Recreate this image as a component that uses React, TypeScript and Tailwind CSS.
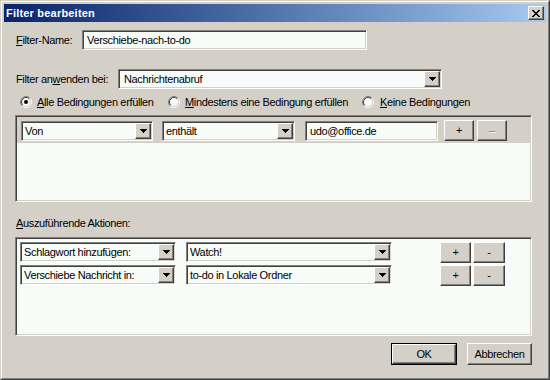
import React from 'react';

const raised =
  'border border-t-white border-l-white border-r-[#404040] border-b-[#404040] shadow-[inset_-1px_-1px_0_#808080] bg-[#d4d0c8]';
const sunken =
  'border border-t-[#808080] border-l-[#808080] border-r-white border-b-white shadow-[inset_1px_1px_0_#404040,inset_-1px_-1px_0_#d4d0c8]';

function Arrow() {
  return (
    <svg width="7" height="4" shapeRendering="crispEdges">
      <rect x="0" y="0" width="7" height="1" fill="#000" />
      <rect x="1" y="1" width="5" height="1" fill="#000" />
      <rect x="2" y="2" width="3" height="1" fill="#000" />
      <rect x="3" y="3" width="1" height="1" fill="#000" />
    </svg>
  );
}

function TextBox({ w, text }: { w: string; text: string }) {
  return (
    <div className={`${sunken} ${w} h-[20px] bg-[#f8fcf8] flex items-center pl-[4px]`}>
      {text}
    </div>
  );
}

function Combo({ w, text, pad = 'pl-[2px]' }: { w: string; text: string; pad?: string }) {
  return (
    <div className={`${sunken} ${w} h-[20px] bg-[#f8fcf8] flex items-stretch p-[1px]`}>
      <span className={`flex-1 flex items-center ${pad} whitespace-nowrap overflow-hidden`}>{text}</span>
      <span className={`${raised} w-[16px] flex items-center justify-center`}>
        <Arrow />
      </span>
    </div>
  );
}

function Btn({ w, h = 'h-[21px]', children, dim }: { w: string; h?: string; children: React.ReactNode; dim?: boolean }) {
  return (
    <div
      className={`${raised} ${w} ${h} flex items-center justify-center ${
        dim ? 'text-[#808080] [text-shadow:1px_1px_0_#fff]' : 'text-black'
      }`}
    >
      {children}
    </div>
  );
}

function Radio({ on }: { on?: boolean }) {
  return (
    <svg width="12" height="12" className="shrink-0">
      <circle cx="6" cy="6" r="4.5" fill="#f8fcf8" />
      <path d="M2.11 9.89 A5.5 5.5 0 0 1 9.89 2.11" stroke="#808080" fill="none" />
      <path d="M9.89 2.11 A5.5 5.5 0 0 1 2.11 9.89" stroke="#ffffff" fill="none" />
      <path d="M2.82 9.18 A4.5 4.5 0 0 1 9.18 2.82" stroke="#404040" fill="none" />
      <path d="M9.18 2.82 A4.5 4.5 0 0 1 2.82 9.18" stroke="#d4d0c8" fill="none" />
      {on && <circle cx="6" cy="6" r="2" fill="#000" />}
    </svg>
  );
}

function CloseGlyph() {
  const px: [number, number][] = [
    [0, 0], [1, 0], [6, 0], [7, 0],
    [1, 1], [2, 1], [5, 1], [6, 1],
    [2, 2], [3, 2], [4, 2], [5, 2],
    [3, 3], [4, 3],
    [2, 4], [3, 4], [4, 4], [5, 4],
    [1, 5], [2, 5], [5, 5], [6, 5],
    [0, 6], [1, 6], [6, 6], [7, 6],
  ];
  return (
    <svg width="8" height="7" shapeRendering="crispEdges">
      {px.map(([x, y]) => (
        <rect key={`${x}-${y}`} x={x} y={y} width="1" height="1" fill="#000" />
      ))}
    </svg>
  );
}

export default function App() {
  return (
    <div className="w-[550px] h-[380px] bg-[#d4d0c8] font-['Liberation_Sans',Arial,sans-serif] text-[11px] tracking-[-0.35px] text-black leading-[13px] select-none">
      {/* window frame */}
      <div className="w-full h-full border border-t-[#d4d0c8] border-l-[#d4d0c8] border-r-[#404040] border-b-[#404040]">
        <div className="w-full h-full border border-t-white border-l-white border-r-[#808080] border-b-[#808080] p-[2px] flex flex-col">
          {/* title bar */}
          <div className="h-[18px] shrink-0 bg-gradient-to-r from-[#0a246a] to-[#a6caf0] flex items-center pl-[2px] pr-[2px]">
            <span className="flex-1 text-white font-bold tracking-[0.2px]">Filter bearbeiten</span>
            <div className={`${raised} w-[16px] h-[14px] flex items-center justify-center`}>
              <CloseGlyph />
            </div>
          </div>

          {/* body */}
          <div className="flex-1 flex flex-col pl-[11px] pr-[14px]">
            <div className="mt-[8px] h-[20px] flex items-center">
              <span className="ml-[1px] w-[66px]">
                <span className="underline">F</span>ilter-Name:
              </span>
              <TextBox w="w-[285px]" text="Verschiebe-nach-to-do" />
            </div>

            <div className="mt-[19px] h-[20px] flex items-center">
              <span className="ml-[1px] w-[102px]">
                Filter an<span className="underline">w</span>enden bei:
              </span>
              <Combo w="w-[324px]" text="Nachrichtenabruf" pad="pl-[4px]" />
            </div>

            <div className="mt-[7px] h-[12px] flex items-center">
              <div className="ml-[5px] w-[148px] flex items-center gap-[5px]">
                <Radio on />
                <span>
                  <span className="underline">A</span>lle Bedingungen erfüllen
                </span>
              </div>
              <div className="w-[194px] flex items-center gap-[5px]">
                <Radio />
                <span>
                  <span className="underline">M</span>indestens eine Bedingung erfüllen
                </span>
              </div>
              <div className="flex items-center gap-[6px]">
                <Radio />
                <span>
                  <span className="underline">K</span>eine Bedingungen
                </span>
              </div>
            </div>

            {/* conditions list */}
            <div className={`${sunken} mt-[7px] h-[87px] bg-[#f8fcf8] p-[1px]`}>
              <div className="h-[26px] bg-[#d4d0c8] flex items-start pt-[3px] pl-[4px]">
                <div className="mt-[1px]">
                  <Combo w="w-[132px]" text="Von" />
                </div>
                <div className="mt-[1px] ml-[9px]">
                  <Combo w="w-[133px]" text="enthält" />
                </div>
                <div className="mt-[1px] ml-[10px]">
                  <TextBox w="w-[133px]" text="udo@office.de" />
                </div>
                <div className="ml-[6px]">
                  <Btn w="w-[30px]">+</Btn>
                </div>
                <div className="ml-[3px]">
                  <Btn w="w-[30px]" dim>
                    –
                  </Btn>
                </div>
              </div>
            </div>

            <div className="mt-[15px]">
              <span className="ml-[1px]">
                <span className="underline">A</span>uszuführende Aktionen:
              </span>
            </div>

            {/* actions list */}
            <div className={`${sunken} mt-[7px] h-[99px] bg-[#f8fcf8] p-[1px] flex flex-col gap-[3px] pt-[4px] pl-[4px]`}>
              {[
                ['Schlagwort hinzufügen:', 'Watch!'],
                ['Verschiebe Nachricht in:', 'to-do in Lokale Ordner'],
              ].map(([a, b]) => (
                <div key={a} className="h-[20px] flex items-start">
                  <Combo w="w-[156px]" text={a} />
                  <div className="ml-[10px]">
                    <Combo w="w-[206px]" text={b} />
                  </div>
                  <div className="ml-[48px]">
                    <Btn w="w-[31px]">+</Btn>
                  </div>
                  <div className="ml-[2px]">
                    <Btn w="w-[32px]">-</Btn>
                  </div>
                </div>
              ))}
            </div>

            {/* dialog buttons */}
            <div className="mt-[7px] flex justify-end gap-[10px]">
              <div className="border border-black">
                <Btn w="w-[64px]" h="h-[20px]">
                  OK
                </Btn>
              </div>
              <Btn w="w-[65px]" h="h-[22px]">
                Abbrechen
              </Btn>
            </div>
          </div>
        </div>
      </div>
    </div>
  );
}
